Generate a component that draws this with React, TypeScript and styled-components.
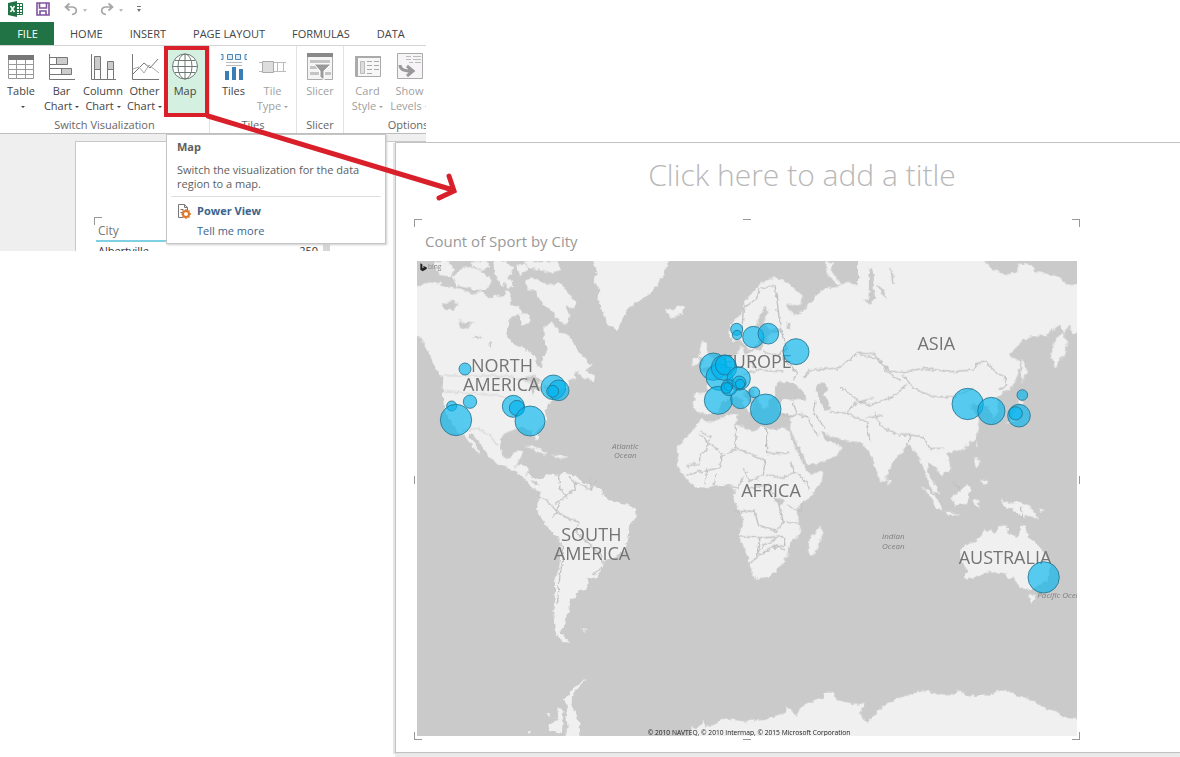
import React from "react";
import styled, { createGlobalStyle, css } from "styled-components";

const GlobalStyle = createGlobalStyle`
  *, *::before, *::after { box-sizing: border-box; }
  body { margin: 0; background: #fff; overflow: hidden; }
  body, button { font-family: "Open Sans", "Noto Sans", sans-serif; }
`;

const Page = styled.main`
  position: relative;
  display: grid;
  grid-template-columns: 394px 32px minmax(0, 1fr);
  grid-template-rows: 142px auto;
  min-height: 100vh;
`;

/* ---------- Excel window ---------- */

const ExcelWindow = styled.section`
  grid-column: 1 / 3;
  grid-row: 1 / 3;
  align-self: start;
  overflow: hidden;
  background: #fff;
`;

const QuickAccess = styled.div`
  display: flex;
  align-items: center;
  height: 22px;
  padding-left: 8px;
`;

const QuickButton = styled.button<{ $gap?: number }>`
  display: flex;
  align-items: center;
  height: 18px;
  margin: 0 ${(p) => p.$gap ?? 0}px 4px 0;
  padding: 0;
  border: 0;
  background: none;
`;

const TabRow = styled.nav`
  display: flex;
  height: 24px;
  border-bottom: 1px solid #d4d4d4;
`;

const Tab = styled.button<{ $file?: boolean }>`
  flex: none;
  height: 23px;
  padding: 0 13px 0 14px;
  border: 0;
  background: none;
  color: #444;
  font-size: 11px;
  line-height: 23px;
  ${(p) =>
    p.$file &&
    css`
      width: 54px;
      margin-right: 2px;
      background: #217346;
      color: #fff;
    `}
`;

const Ribbon = styled.div`
  display: flex;
  height: 88px;
  border-bottom: 1px solid #bdbdbd;
`;

const Group = styled.div<{ $width: number }>`
  display: flex;
  flex: none;
  flex-direction: column;
  width: ${(p) => p.$width}px;
  border-right: 1px solid #e2e2e2;
`;

const GroupButtons = styled.div`
  display: flex;
  justify-content: center;
  height: 71px;
`;

const GroupLabel = styled.span`
  color: #666;
  font-size: 11px;
  line-height: 15px;
  text-align: center;
`;

const RibbonButton = styled.button<{ $width: number; $active?: boolean }>`
  display: flex;
  flex: none;
  flex-direction: column;
  align-items: center;
  width: ${(p) => p.$width}px;
  padding: 6px 0 0;
  border: 0;
  background: none;
  color: #444;
  font-size: 11px;
  line-height: 15px;
  white-space: nowrap;
  svg { flex: none; margin-bottom: 3px; }
  &:disabled { color: #a0a0a0; }
  ${(p) =>
    p.$active &&
    css`
      border: 4px solid #d9202a;
      padding: 2px 3px 0 0;
      background: #d3f0e0;
    `}
`;

const Caret = styled.i`
  display: inline-block;
  margin-left: 3px;
  border: 2px solid transparent;
  border-top-color: currentColor;
  border-bottom: 0;
  vertical-align: 2px;
`;

const Sheet = styled.div`
  position: relative;
  height: 117px;
  padding: 7px 0 0 75px;
  background: #efefef;
`;

const SheetPaper = styled.div`
  height: 110px;
  padding: 75px 0 0 18px;
  overflow: hidden;
  border: 1px solid #c8c8c8;
  border-width: 1px 0 0 1px;
  background: #fff;
`;

const TableFrame = styled.div`
  display: flex;
  width: 236px;
  &::before {
    content: "";
    width: 8px;
    height: 8px;
    margin-right: -8px;
    border: 1px solid #999;
    border-width: 1px 0 0 1px;
  }
`;

const CityTable = styled.table`
  width: 228px;
  margin-left: 2px;
  border-collapse: collapse;
  font-size: 11px;
  line-height: 18px;
  th {
    height: 24px;
    padding: 5px 2px 0;
    border-bottom: 2px solid #7fd0e2;
    color: #777;
    font-size: 12px;
    font-weight: 400;
    text-align: left;
  }
  td { padding: 0 2px; color: #333; }
  td + td { text-align: right; padding-right: 5px; }
`;

const ScrollThumb = styled.span`
  flex: none;
  width: 7px;
  margin-top: 27px;
  background: #d6d6d6;
`;

const Tooltip = styled.aside`
  position: absolute;
  top: 0;
  left: 166px;
  width: 220px;
  height: 110px;
  padding: 4px 4px 0;
  border: 1px solid #c6c6c6;
  background: #fff;
  box-shadow: 1px 1px 2px #ccc;
  color: #606060;
  font-size: 11px;
  line-height: 14px;
`;

const TipTitle = styled.strong`
  display: block;
  margin: 0 6px;
  line-height: 16px;
`;

const TipText = styled.p`
  margin: 8px 6px 5px;
`;

const TipLinks = styled.div`
  display: grid;
  grid-template-columns: 20px 1fr;
  align-items: center;
  padding: 4px 6px 0;
  border-top: 1px solid #dedede;
`;

const TipLink = styled.a<{ $strong?: boolean }>`
  grid-column: 2;
  color: #3a648c;
  font-weight: ${(p) => (p.$strong ? 700 : 400)};
  line-height: 20px;
  text-decoration: none;
`;

/* ---------- Report ---------- */

const Report = styled.section`
  z-index: 1;
  grid-column: 2 / 4;
  grid-row: 2;
  align-self: start;
  margin-left: 1px;
  padding: 0 100px 12px 18px;
  border: 1px solid #c2c2c2;
  border-right: 0;
  background: #fff;
  box-shadow: -2px 1px 0 #e4e4e4, 0 5px 0 #ebebeb;
`;

const TitleCenter = styled.div`
  margin: 0 -84px 12px 26px;
`;

const ReportTitle = styled.button`
  display: block;
  width: 100%;
  padding: 0;
  border: 0;
  background: none;
  color: #b8b8b8;
  font-size: 30px;
  font-weight: 300;
  line-height: 64px;
  text-align: center;
`;

const Visual = styled.figure`
  position: relative;
  margin: 0;
  padding: 3px 3px 4px;
`;

const VisualTitle = styled.figcaption`
  height: 39px;
  padding-left: 8px;
  color: #999;
  font-size: 15px;
  line-height: 38px;
`;

const Corner = styled.span<{ $v: "top" | "bottom"; $h: "left" | "right" }>`
  position: absolute;
  ${(p) => p.$v}: 0;
  ${(p) => p.$h}: 0;
  width: 8px;
  height: 8px;
  border-${(p) => p.$v}: 1px solid #999;
  border-${(p) => p.$h}: 1px solid #999;
`;

const EdgeMark = styled.span<{ $side: "top" | "bottom" | "left" | "right" }>`
  position: absolute;
  ${(p) => p.$side}: 0;
  background: #999;
  ${(p) =>
    p.$side === "top" || p.$side === "bottom"
      ? css`left: calc(50% - 4px); width: 8px; height: 1px;`
      : css`top: calc(50% - 4px); width: 1px; height: 8px;`}
`;

const MapSvg = styled.svg`
  display: block;
  width: 100%;
  height: auto;
  background: #cacaca;
  font-family: "Open Sans", "Noto Sans", sans-serif;
`;

const Arrow = styled.svg`
  position: absolute;
  z-index: 2;
  top: 110px;
  left: 200px;
  pointer-events: none;
`;

/* ---------- Icons ---------- */

const Icon = ({ children, w = 28, h = 28 }: { children: React.ReactNode; w?: number; h?: number }) => (
  <svg width={w} height={h} viewBox={`0 0 ${w} ${h}`} fill="none" stroke="#777" aria-hidden="true">
    {children}
  </svg>
);

const TableIcon = () => (
  <Icon>
    <path d="M1.500 3.500h25v23h-25zM1.500 12.500h25M1.500 17.500h25M1.500 22.500h25M9.500 8v18M18.500 8v18" fill="#fff" stroke="#999" />
    <path d="M1 3h26v5H1z" fill="#777" stroke="none" />
  </Icon>
);
const BarIcon = () => (
  <Icon>
    <path d="M1.500 2v25.500H27" />
    <path d="M1.500 5.500h7v7h-7zM1.500 16.500h13v6h-13z" fill="#fff" />
    <path d="M8.500 5.500h11v7h-11zM13.500 16.500h10v6h-10z" fill="#ccc" />
  </Icon>
);
const ColumnIcon = () => (
  <Icon>
    <path d="M2.500 2v25.500H27" />
    <path d="M5.500 17.500h6v10h-6zM18.500 17.500h6v10h-6z" fill="#fff" />
    <path d="M5.500 4.500h6v13h-6zM18.500 9.500h6v8h-6z" fill="#ccc" />
  </Icon>
);
const LineIcon = () => (
  <Icon>
    <path d="M1.500 2v25.500H28" />
    <path d="M2 22l11-11 6 5 8-9" />
    <path d="M2 17l6-2 5 6 5-8 10 8" stroke="#aaa" />
  </Icon>
);
const GlobeIcon = () => (
  <Icon>
    <circle cx="14" cy="14.500" r="12.500" fill="#fff" stroke="#6b7b73" />
    <path d="M14 2v25M1.500 14.500h25M4 8.500h20M4 20.500h20" stroke="#6b7b73" />
    <ellipse cx="14" cy="14.500" rx="7" ry="12.500" stroke="#6b7b73" />
  </Icon>
);
const TilesIcon = () => (
  <Icon>
    <path d="M1 2.500h2v5H1M7.500 2.500h5v5h-5zM15.500 2.500h5v5h-5zM27 2.500h-2v5h2" stroke="#4b86b4" fill="#dcebf6" />
    <path d="M6 10.500h16M6 13.500h16" stroke="#bbb" />
    <path d="M5 19h4v9H5zM12 15h4v13h-4zM19 17h4v11h-4z" fill="#3b7eb5" stroke="none" />
  </Icon>
);
const TileTypeIcon = () => (
  <Icon>
    <path d="M0 10.500h27M0 19.500h27M18.500 10v9M24.500 10v9" stroke="#bbb" />
    <path d="M3.500 9.500h11v11h-11z" fill="#ddd" stroke="#aaa" />
  </Icon>
);
const SlicerIcon = () => (
  <Icon>
    <path d="M1.500 1.500h25v26h-25z" fill="#f4f4f4" stroke="#aaa" />
    <path d="M1 1h26v4H1z" fill="#888" stroke="none" />
    <path d="M4 8h20v3H4zM4 14h7v3H4zM4 20h9v3H4zM19 20h6v3h-6z" fill="#c4c4c4" stroke="none" />
    <path d="M8 12h17l-7 7v9l-4-3v-6z" fill="#999" stroke="#fff" />
  </Icon>
);
const CardIcon = () => (
  <Icon>
    <path d="M1.500 4.500h25v20h-25z" fill="#f7f7f7" stroke="#aaa" />
    <path d="M1 4h26v2H1zM1 4h3v20H1z" fill="#aaa" stroke="none" />
    <path d="M6.500 9.500h4v12h-4z" fill="#ddd" stroke="#bbb" />
    <path d="M13 9.500h5M20 9.500h5M13 13.500h5M20 13.500h5M13 17.500h5M20 17.500h5M13 21.500h5" stroke="#aaa" />
  </Icon>
);
const LevelsIcon = () => (
  <Icon>
    <path d="M1.500 1.500h25v25h-25z" fill="#f6f4f6" stroke="#aaa" />
    <path d="M10 4.500h5M17 4.500h8M10 7.500h5M17 7.500h8M13 10.500h4M19 10.500h6" stroke="#bbb" />
    <path d="M4 13c0 4 4 6 11 6M11 14l6 5-6 5" stroke="#999" strokeWidth="3" />
  </Icon>
);
const ExcelIcon = () => (
  <Icon w={16} h={16}>
    <path d="M8.500 2.500h6v11h-6M11.500 3v10M9 5.500h5M9 8.500h5M9 11.500h5" stroke="#217346" />
    <path d="M0 2l9-2v16l-9-2z" fill="#217346" stroke="none" />
    <path d="M2.500 5l4 6M6.500 5l-4 6" stroke="#fff" strokeWidth="1.500" />
  </Icon>
);
const SaveIcon = () => (
  <Icon w={14} h={14}>
    <path d="M1 1h12v12H1zM3.500 1v5h7V1M4 13V9h6v4" stroke="#8052a0" strokeWidth="1.600" />
  </Icon>
);
const UndoIcon = ({ flip }: { flip?: boolean }) => (
  <Icon w={14} h={14}>
    <path
      d="M5.500 1.500L1.500 5l4 3.500M2 5h6c6 0 5.500 7 0 7.500"
      stroke="#a5a5a5"
      strokeWidth="1.700"
      transform={flip ? "matrix(-1 0 0 1 14 0)" : undefined}
    />
  </Icon>
);
const SmallCaret = ({ bar }: { bar?: boolean }) => (
  <Icon w={6} h={8}>
    {bar && <path d="M1 1.500h4" stroke="#777" />}
    <path d="M1 4h4l-2 3z" fill={bar ? "#777" : "#bbb"} stroke="none" />
  </Icon>
);
const HelpIcon = () => (
  <Icon w={14} h={16}>
    <path d="M6 14.500H1.500v-13h6l3 3v3M7.500 1.500v3h3M3.500 6.500h3M3.500 9.500h2" stroke="#777" />
    <circle cx="9" cy="11" r="3" stroke="#e0762a" strokeWidth="2" />
    <path d="M9 6v2M9 14v2M4.500 11h2M12 11h2M5.500 7.500l1.500 1.500M11 13l1.500 1.500M12.500 7.500L11 9M7 13l-1.500 1.500" stroke="#e0762a" strokeWidth="1.400" />
  </Icon>
);

/* ---------- Map data (three units to the pixel) ---------- */

type Bubble = [number, number, number];
const bubbles: Bubble[] = [
  [165, 342, 18], [180, 440, 20], [125, 453, 15], [138, 495, 47],
  [310, 454, 33], [321, 459, 23], [360, 498, 45],
  [430, 397, 37], [446, 406, 31], [428, 409, 18],
  [980, 223, 18], [981, 240, 14], [1030, 246, 32], [1075, 236, 31], [1158, 290, 39],
  [910, 335, 41], [928, 366, 40], [942, 338, 38], [946, 330, 30], [986, 371, 35],
  [925, 436, 42], [992, 431, 30], [1033, 412, 16], [1067, 463, 46],
  [957, 398, 24], [988, 383, 20], [955, 394, 13], [990, 387, 14], [950, 399, 16],
  [1673, 447, 47], [1744, 468, 41], [1827, 482, 34], [1817, 475, 20], [1837, 420, 16],
  [1901, 967, 47],
];

const labels: { text: string; x: number; y: number }[] = [
  { text: "NORTH", x: 276, y: 351 },
  { text: "AMERICA", x: 274, y: 408 },
  { text: "EUROPE", x: 1042, y: 340 },
  { text: "ASIA", x: 1579, y: 285 },
  { text: "AFRICA", x: 1083, y: 725 },
  { text: "SOUTH", x: 544, y: 857 },
  { text: "AMERICA", x: 546, y: 914 },
  { text: "AUSTRALIA", x: 1785, y: 928 },
];

const oceans: { text: string; x: number; y: number }[] = [
  { text: "Atlantic", x: 646, y: 583 },
  { text: "Ocean", x: 646, y: 610 },
  { text: "Indian", x: 1450, y: 853 },
  { text: "Ocean", x: 1450, y: 881 },
];

const WorldMap = () => (
  <MapSvg viewBox="21 18 1980 1425" role="img" aria-label="World map of cities">
    <defs>
      <filter id="coast" x="0" y="0" width="100%" height="100%">
        <feTurbulence type="fractalNoise" baseFrequency=".07" numOctaves="2" seed="4" result="n" />
        <feDisplacementMap in="SourceGraphic" in2="n" scale="15" xChannelSelector="R" yChannelSelector="G" />
        <feGaussianBlur stdDeviation="1.800" />
      </filter>
    </defs>
    <g filter="url(#coast)">
      <g fill="#f0f0f0">
        {/* North and Central America */}
        <path d="M0 102L45 85 75 80 100 92 135 98 165 105 190 118 215 108 240 130 262 120 280 128 290 105 305 115 300 150 325 150 335 175 305 185 292 205 290 240 312 268 350 284 375 305 380 335 396 340 398 310 412 285 402 250 400 215 425 203 440 215 455 235 475 240 490 258 505 290 530 312 545 332 520 350 490 355 500 370 475 372 478 398 455 400 440 425 415 445 405 470 412 490 390 520 378 530 388 552 376 555 366 530 345 518 318 522 290 532 272 552 270 580 280 608 300 610 312 592 338 586 330 610 322 630 355 632 356 668 378 692 400 684 412 698 390 712 368 700 342 670 315 648 262 628 236 602 215 572 184 534 178 540 212 598 200 590 165 545 140 528 112 482 100 440 98 400 100 366 78 345 60 302 45 268 21 242 0 230Z" />
        <path d="M505 358L520 345 555 362 552 378 530 372Z" />
        {/* Arctic islands */}
        <path d="M75 18L115 18 135 45 120 65 90 60 75 40ZM125 65L165 35 210 45 245 75 235 100 205 108 170 98 140 92ZM180 18L230 18 240 35 215 45 190 35ZM250 20L285 18 310 40 300 60 275 95 255 60ZM318 30L345 25 355 45 330 60ZM345 75L370 70 420 90 450 80 470 110 500 145 488 160 465 150 480 185 470 210 440 190 425 165 400 150 375 110 350 100ZM340 18L440 18 455 40 430 55 400 45 360 40ZM328 175L362 182 360 205 335 208ZM285 70L305 75 308 98 288 98Z" />
        {/* Greenland and Iceland */}
        <path d="M545 10L562 48 550 75 568 105 565 140 582 178 598 212 622 226 638 190 656 158 690 135 722 115 742 88 762 60 778 10ZM765 158L785 165 805 150 822 158 815 175 790 190 772 178Z" />
        {/* Caribbean */}
        <path d="M340 572L370 574 412 595 400 598 370 582ZM420 598L455 602 478 606 450 610Z" />
      </g>
      <g transform="translate(270 615)" fill="#f0f0f0">
        <path d="M65 15L95 50 118 58 132 55 150 40 175 45 190 38 230 48 255 70 300 85 310 105 330 120 380 133 408 148 410 170 390 195 385 235 375 272 340 290 315 305 302 335 285 358 262 352 266 372 258 390 232 394 228 410 212 420 205 440 210 455 196 475 192 500 182 515 195 535 208 545 185 542 165 515 160 460 165 400 165 360 178 320 182 260 175 230 150 212 130 180 112 155 112 130 120 105 132 80 110 70 85 55 60 35Z" />
        <path d="M245 508L260 510 252 516ZM265 655L238 668 212 695 192 718 204 738 198 765 203 800 195 835 242 835 238 790 228 760 215 738 216 705 240 675ZM172 740L190 750 186 820 150 810 145 795 175 780ZM142 758L154 762 150 772ZM80 812L95 818 85 824Z" />
      </g>
      {/* Africa and Madagascar */}
      <path transform="translate(720 435)" fill="#f0f0f0" d="M130 88L152 60 185 65 245 42 262 46 256 72 292 85 312 97 332 80 380 88 405 84 418 98 428 125 442 160 456 185 470 212 482 222 520 215 515 245 482 290 455 312 440 335 446 365 454 395 440 410 420 428 415 460 400 487 375 515 355 530 315 537 305 515 300 490 285 450 268 405 280 360 275 340 262 322 250 300 256 275 242 258 200 255 170 262 132 262 108 235 90 210 80 190 86 160 80 140 110 110ZM510 376L517 400 495 463 480 468 474 445 480 412 500 398Z" />
      {/* Europe and western Asia */}
      <g transform="translate(750 0)" fill="#f0f0f0">
        <path d="M345 66L302 85 280 108 255 140 245 175 215 205 205 230 215 258 240 255 252 262 262 285 285 280 305 240 288 210 302 180 315 155 325 165 310 200 325 222 350 218 365 228 325 240 320 265 300 282 255 296 242 270 232 300 200 308 180 330 150 345 122 352 142 375 145 412 105 415 100 460 120 472 150 480 175 470 190 440 215 425 240 430 268 475 280 462 250 412 272 402 300 440 310 465 328 450 328 432 345 425 345 402 355 380 400 385 420 410 440 430 430 436 370 432 355 450 365 478 395 478 390 520 410 565 430 600 442 632 500 615 530 600 548 578 530 566 500 560 480 530 490 530 515 548 560 556 600 562 618 576 640 615 655 660 670 682 690 640 700 612 730 590 730 10 600 10 606 55 590 95 560 78 540 95 500 100 470 120 435 160 410 180 385 165 382 146 420 150 428 122 392 90 365 76Z" />
        <path d="M500 18L520 25 515 50 535 75 550 92 530 90 508 65 498 42ZM125 258L142 264 140 285 158 315 156 335 122 340 132 315 118 300ZM98 310L118 302 118 325 96 334Z" />
        <path d="M680 670L692 680 686 692Z" />
      </g>
      {/* Eastern Asia */}
      <g transform="translate(1350 0)" fill="#f0f0f0">
        <path d="M-5 10L370 10 388 38 420 50 432 62 470 50 478 26 510 30 530 50 600 66 618 88 670 92 670 225 636 238 630 210 608 235 624 262 612 300 585 338 574 300 580 262 612 228 595 212 560 240 500 246 470 276 445 300 465 312 482 320 475 355 458 395 425 415 410 430 415 470 398 490 385 455 352 448 330 450 352 482 355 520 345 550 312 582 270 592 258 595 272 625 268 645 245 660 232 645 205 618 202 645 218 682 238 712 222 716 202 675 188 632 172 600 150 568 138 575 110 602 85 640 78 672 64 680 42 632 30 590 -5 560Z" />
        <path d="M485 310L496 330 504 358 492 362 490 390 484 355ZM478 430L492 440 484 452 474 445ZM470 452L484 470 470 500 440 505 455 490ZM345 608L358 620 352 640 342 630ZM360 672L382 678 372 690ZM350 560L356 570 348 578Z" />
      </g>
      {/* South-east Asia, Australia, Antarctica */}
      <g transform="translate(1410 615)" fill="#f0f0f0">
        <path d="M125 78L148 92 172 118 190 152 172 145 150 110ZM145 48L160 70 178 100 165 98 152 72ZM190 152L218 158 240 166 205 164ZM213 112L238 95 262 72 272 85 262 132 228 135ZM280 120L300 122 290 130 302 148 288 138ZM305 60L325 62 318 74ZM285 0L298 10 290 22ZM362 118L385 132 415 122 450 142 478 178 450 168 425 170 398 150 372 138ZM135 0L170 5 205 18 208 35 185 42 165 20ZM475 145L495 150 480 155Z" />
        <path d="M240 272L252 258 290 242 318 212 335 208 345 222 358 198 385 195 382 216 415 232 424 194 434 196 446 230 475 258 500 292 515 315 500 362 450 388 420 385 402 352 385 358 378 340 330 334 290 350 260 358 252 350 262 330 245 300ZM444 407L468 408 455 428Z" />
        <path d="M-570 850L-565 798 -552 808 -530 780 -524 802 -508 800 -480 780 -460 775 -410 784 -350 780 -282 758 -280 738 -250 768 -230 738 -200 724 -170 715 -165 698 -138 698 -132 716 -70 735 -46 728 -60 765 -35 790 -10 755 15 735 50 716 100 700 145 690 170 706 220 705 235 690 260 708 320 706 370 688 420 710 450 716 500 745 530 755 550 772 610 780 610 850Z" />
      </g>
      {/* Lakes and inland seas */}
      <g fill="#cacaca">
        <path d="M95 150L125 138 145 145 130 165 105 165ZM145 195L165 205 195 200 165 222 150 218ZM185 248L215 242 205 252ZM238 262L246 260 240 282ZM345 365L375 360 398 378 385 386 395 410 378 402 368 420 362 395 372 380 348 378ZM400 385L418 398 405 404Z" />
        <path d="M1095 395L1112 380 1148 385 1180 408 1188 428 1150 424 1115 428 1098 418ZM1222 388L1245 383 1255 405 1242 415 1252 435 1262 462 1240 468 1232 440 1220 415ZM1130 200L1142 205 1138 228 1130 220ZM1378 40L1386 35 1392 70 1388 100 1398 130 1382 145 1360 140 1378 130 1380 90ZM1440 35L1450 60 1455 85 1446 82ZM1400 85L1420 105 1432 130 1412 115ZM1098 738L1110 728 1122 740 1110 752Z" />
      </g>
      {/* Country borders */}
      <g fill="none" stroke="#c2c2c2" strokeWidth="4" strokeLinejoin="round">
        <path stroke="#dadada" d="M100 362H285L330 372 400 400 450 380M20 240L50 270M155 530L200 520 240 540 262 572M100 410L190 415 245 418 300 430M315 640L325 620M355 650L345 665" />
        <path d="M445 660L450 700 470 725 435 745M470 725L495 700 492 680 545 705 560 670M385 725L420 745 440 770 475 790 505 800 500 830 540 870 575 900 580 930 550 960M455 860L460 900 450 960 442 1050M500 690L475 665M540 670L545 710M450 745L430 785" />
        <path d="M870 530L900 545 890 585 870 600 868 628 830 632M870 540L940 602 980 580 975 505M940 602L925 640 870 650 830 660M1070 515V595H1140M980 580L1030 600 1065 615 1060 660 1020 680 1000 640M1065 660L1120 670 1155 650 1140 620M1000 665L985 700 960 690 930 695M1155 650L1175 665 1200 700M970 770L1035 768 1045 810 1100 830 1120 800 1105 745 1075 690 1010 700M990 845L1050 848 1040 900 1060 870 1100 850M1050 848L1120 845 1125 870 1090 880M1020 925L1050 900 1100 870 1125 885M1130 800L1170 808M1180 740L1170 770 1130 750M890 640L885 690M920 655L912 690" />
        <path d="M1050 100L1040 130 1000 160 995 240M1050 100L1095 90 1100 130 1110 210M1110 215L1130 280 1100 300 1060 290M1130 280L1120 310 1165 355 1150 375M1010 300L1040 345 1000 360M1040 345L1120 350M1150 440L1160 475 1190 485 1215 530 1225 540M1215 440L1210 470 1245 520M1115 480L1145 485 1160 475M1180 370L1200 345 1280 340 1320 315 1340 295 1390 295 1415 320 1430 350 1470 375M1290 395L1350 440 1390 430M1260 470L1310 475 1370 500 1380 560M1310 475L1340 440" />
        <path d="M1350 300L1400 310 1440 350 1490 350 1540 340 1620 350 1690 345 1700 325 1730 320 1760 355 1785 365 1790 390 1765 405M1480 360L1510 400 1570 425 1630 425 1690 400M1350 440L1380 450 1450 425 1490 390M1390 470L1420 520 1470 540 1500 540 1540 545 1560 580 1600 580M1370 490L1420 480M1500 540L1490 580" />
        <path d="M1835 755V790M1630 680L1650 705" />
      </g>
    </g>
    <g fill="#747474" fontSize="54" fontWeight="500" textAnchor="middle">
      {labels.map((l) => (
        <text key={l.text + l.y} x={l.x} y={l.y}>{l.text}</text>
      ))}
    </g>
    <g fill="#808080" fontSize="24" fontWeight="500" fontStyle="italic" textAnchor="middle">
      {oceans.map((l) => (
        <text key={l.text + l.y} x={l.x} y={l.y}>{l.text}</text>
      ))}
      <text x="1882" y="1028" textAnchor="start">Pacific Ocean</text>
    </g>
    <g fill="#00b4ee" fillOpacity=".64" stroke="#236f8a" strokeOpacity=".8" strokeWidth="3">
      {bubbles.map(([x, y, r]) => (
        <circle key={`${x}-${y}`} cx={x} cy={y} r={r} />
      ))}
    </g>
    <path d="M31 25l6 3v12l5-3-4-5 12 5v5l-12 7-7-5z" fill="#222" />
    <text x="54" y="42" fontSize="20" fill="#8a8a8a">bing</text>
    <text x="713" y="1440" fontSize="20" fill="#222">© 2010 NAVTEQ, © 2010 Intermap, © 2015 Microsoft Corporation</text>
  </MapSvg>
);

/* ---------- Page ---------- */

const tabs = ["HOME", "INSERT", "PAGE LAYOUT", "FORMULAS", "DATA"];

type Tool = { icon: React.ReactNode; top: string; bottom?: string; caret?: boolean; width: number; active?: boolean; disabled?: boolean };
const groups: { label: string; width: number; tools: Tool[] }[] = [
  {
    label: "Switch Visualization",
    width: 210,
    tools: [
      { icon: <TableIcon />, top: "Table", bottom: "", caret: true, width: 42 },
      { icon: <BarIcon />, top: "Bar", bottom: "Chart", caret: true, width: 39 },
      { icon: <ColumnIcon />, top: "Column", bottom: "Chart", caret: true, width: 44 },
      { icon: <LineIcon />, top: "Other", bottom: "Chart", caret: true, width: 39 },
      { icon: <GlobeIcon />, top: "Map", width: 45, active: true },
    ],
  },
  {
    label: "Tiles",
    width: 87,
    tools: [
      { icon: <TilesIcon />, top: "Tiles", width: 39 },
      { icon: <TileTypeIcon />, top: "Tile", bottom: "Type", caret: true, width: 39, disabled: true },
    ],
  },
  {
    label: "Slicer",
    width: 47,
    tools: [{ icon: <SlicerIcon />, top: "Slicer", width: 42, disabled: true }],
  },
  {
    label: "Options",
    width: 129,
    tools: [
      { icon: <CardIcon />, top: "Card", bottom: "Style", caret: true, width: 42, disabled: true },
      { icon: <LevelsIcon />, top: "Show", bottom: "Levels", caret: true, width: 42, disabled: true },
      { icon: <CardIcon />, top: "", width: 39, disabled: true },
    ],
  },
];

export default function App() {
  return (
    <>
      <GlobalStyle />
      <Page>
        <ExcelWindow>
          <QuickAccess>
            <QuickButton $gap={12} aria-label="Excel"><ExcelIcon /></QuickButton>
            <QuickButton $gap={14} aria-label="Save"><SaveIcon /></QuickButton>
            <QuickButton $gap={4} aria-label="Undo"><UndoIcon /></QuickButton>
            <QuickButton $gap={12} aria-label="Undo list"><SmallCaret /></QuickButton>
            <QuickButton $gap={4} aria-label="Redo"><UndoIcon flip /></QuickButton>
            <QuickButton $gap={12} aria-label="Redo list"><SmallCaret /></QuickButton>
            <QuickButton aria-label="Customize toolbar"><SmallCaret bar /></QuickButton>
          </QuickAccess>
          <TabRow>
            <Tab $file>FILE</Tab>
            {tabs.map((t) => <Tab key={t}>{t}</Tab>)}
          </TabRow>
          <Ribbon>
            {groups.map((g) => (
              <Group key={g.label} $width={g.width}>
                <GroupButtons>
                  {g.tools.map((t) => (
                    <RibbonButton key={t.top} $width={t.width} $active={t.active} disabled={t.disabled}>
                      {t.icon}
                      <span>{t.top}</span>
                      {t.caret && <span>{t.bottom}<Caret /></span>}
                    </RibbonButton>
                  ))}
                </GroupButtons>
                <GroupLabel>{g.label}</GroupLabel>
              </Group>
            ))}
          </Ribbon>
          <Sheet>
            <SheetPaper>
              <TableFrame>
                <CityTable>
                  <thead><tr><th colSpan={2}>City</th></tr></thead>
                  <tbody><tr><td>Albertville</td><td>250</td></tr></tbody>
                </CityTable>
                <ScrollThumb />
              </TableFrame>
            </SheetPaper>
            <Tooltip>
              <TipTitle>Map</TipTitle>
              <TipText>Switch the visualization for the data region to a map.</TipText>
              <TipLinks>
                <HelpIcon />
                <TipLink href="#power-view" $strong>Power View</TipLink>
                <TipLink href="#help">Tell me more</TipLink>
              </TipLinks>
            </Tooltip>
          </Sheet>
        </ExcelWindow>

        <Report>
          <TitleCenter>
            <ReportTitle>Click here to add a title</ReportTitle>
          </TitleCenter>
          <Visual>
            <VisualTitle>Count of Sport by City</VisualTitle>
            <WorldMap />
            <Corner $v="top" $h="left" />
            <Corner $v="top" $h="right" />
            <Corner $v="bottom" $h="left" />
            <Corner $v="bottom" $h="right" />
            <EdgeMark $side="top" />
            <EdgeMark $side="bottom" />
            <EdgeMark $side="left" />
            <EdgeMark $side="right" />
          </Visual>
        </Report>

        <Arrow width="264" height="96" viewBox="200 110 264 96" fill="none" stroke="#d9202a" strokeWidth="5" strokeLinecap="round" aria-hidden="true">
          <path d="M208 116L453 190M449 176L454 191 439 198" />
        </Arrow>
      </Page>
    </>
  );
}
